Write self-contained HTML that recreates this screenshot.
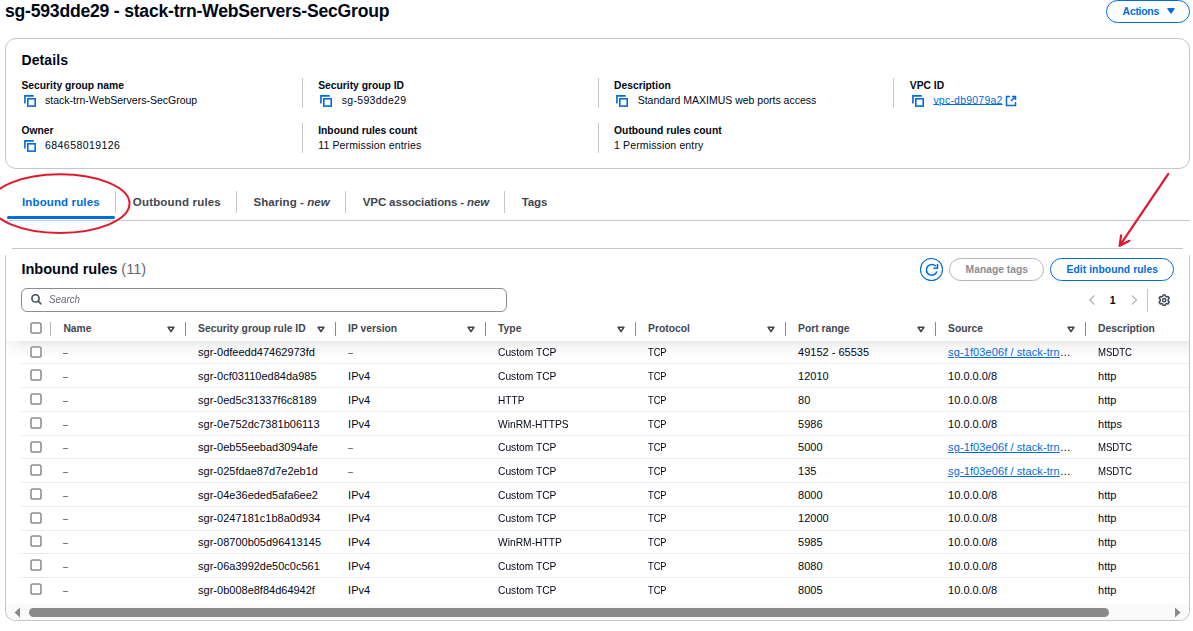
<!DOCTYPE html>
<html><head><meta charset="utf-8"><style>
html,body{margin:0;padding:0;background:#fff;}
body{width:1193px;height:631px;overflow:hidden;position:relative;font-family:"Liberation Sans", sans-serif;}
.t{position:absolute;white-space:nowrap;}
.r{position:absolute;}
</style></head><body>
<div class="t" style="left:5.00px;top:2.50px;font-size:17.6px;line-height:17.6px;font-weight:700;color:#000716;font-style:normal;letter-spacing:-0.22px;">sg-593dde29 - stack-trn-WebServers-SecGroup</div>
<div class="r" style="left:1106px;top:0px;width:84px;height:23px;box-sizing:border-box;border:1.8px solid #006ce0;border-radius:12px;"></div>
<div class="t" style="left:1122.60px;top:6.11px;font-size:10.5px;line-height:10.5px;font-weight:700;color:#006ce0;font-style:normal;letter-spacing:-0.3px;">Actions</div>
<svg class="r" style="left:1166px;top:7px" width="10" height="8"><path d="M1.6 1.6 H8.4 L5 6.4 Z" fill="#006ce0" stroke="#006ce0" stroke-width="1" stroke-linejoin="round"/></svg>
<div class="r" style="left:5px;top:38px;width:1185px;height:131px;box-sizing:border-box;border:1px solid #c6c6cd;border-radius:11px;"></div>
<div class="t" style="left:21.50px;top:52.65px;font-size:14px;line-height:14px;font-weight:700;color:#000716;font-style:normal;letter-spacing:0.1px;">Details</div>
<div class="r" style="left:302px;top:78px;width:1px;height:30px;background:#c6c6cd;"></div>
<div class="r" style="left:598px;top:78px;width:1px;height:30px;background:#c6c6cd;"></div>
<div class="r" style="left:893px;top:78px;width:1px;height:30px;background:#c6c6cd;"></div>
<div class="r" style="left:302px;top:123px;width:1px;height:30px;background:#c6c6cd;"></div>
<div class="r" style="left:598px;top:123px;width:1px;height:30px;background:#c6c6cd;"></div>
<div class="t" style="left:21.50px;top:80.98px;font-size:10.3px;line-height:10.3px;font-weight:700;color:#000716;font-style:normal;letter-spacing:0px;">Security group name</div>
<svg class="r" style="left:24px;top:94px" width="13" height="13" viewBox="0 0 13 13"><path d="M0.9 9.4 V1.9 H9.7" fill="none" stroke="#006ce0" stroke-width="1.6"/><rect x="3.8" y="4.8" width="7.4" height="7.3" fill="none" stroke="#006ce0" stroke-width="1.6"/></svg>
<div class="t" style="left:45.10px;top:94.71px;font-size:10.5px;line-height:10.5px;font-weight:400;color:#000716;font-style:normal;letter-spacing:0px;">stack-trn-WebServers-SecGroup</div>
<div class="t" style="left:318.20px;top:80.98px;font-size:10.3px;line-height:10.3px;font-weight:700;color:#000716;font-style:normal;letter-spacing:0px;">Security group ID</div>
<svg class="r" style="left:320px;top:94px" width="13" height="13" viewBox="0 0 13 13"><path d="M0.9 9.4 V1.9 H9.7" fill="none" stroke="#006ce0" stroke-width="1.6"/><rect x="3.8" y="4.8" width="7.4" height="7.3" fill="none" stroke="#006ce0" stroke-width="1.6"/></svg>
<div class="t" style="left:341.80px;top:94.71px;font-size:10.5px;line-height:10.5px;font-weight:400;color:#000716;font-style:normal;letter-spacing:0px;"><span style="letter-spacing:0.3px">sg-593dde29</span></div>
<div class="t" style="left:614.10px;top:80.98px;font-size:10.3px;line-height:10.3px;font-weight:700;color:#000716;font-style:normal;letter-spacing:0px;">Description</div>
<svg class="r" style="left:616px;top:94px" width="13" height="13" viewBox="0 0 13 13"><path d="M0.9 9.4 V1.9 H9.7" fill="none" stroke="#006ce0" stroke-width="1.6"/><rect x="3.8" y="4.8" width="7.4" height="7.3" fill="none" stroke="#006ce0" stroke-width="1.6"/></svg>
<div class="t" style="left:637.70px;top:94.71px;font-size:10.5px;line-height:10.5px;font-weight:400;color:#000716;font-style:normal;letter-spacing:0px;">Standard MAXIMUS web ports access</div>
<div class="t" style="left:909.80px;top:80.98px;font-size:10.3px;line-height:10.3px;font-weight:700;color:#000716;font-style:normal;letter-spacing:0px;">VPC ID</div>
<svg class="r" style="left:912px;top:94px" width="13" height="13" viewBox="0 0 13 13"><path d="M0.9 9.4 V1.9 H9.7" fill="none" stroke="#006ce0" stroke-width="1.6"/><rect x="3.8" y="4.8" width="7.4" height="7.3" fill="none" stroke="#006ce0" stroke-width="1.6"/></svg>
<div class="t" style="left:933.40px;top:94.71px;font-size:10.5px;line-height:10.5px;font-weight:400;color:#000716;font-style:normal;letter-spacing:0px;"><span style="color:#006ce0;text-decoration:underline;text-underline-offset:0.3px;letter-spacing:0.22px;padding-right:3px">vpc-db9079a2</span></div>
<svg class="r" style="left:1005px;top:95px" width="12" height="12" viewBox="0 0 12 12"><path d="M5 1.5 H1.5 V10.5 H10.5 V7" fill="none" stroke="#006ce0" stroke-width="1.5"/><path d="M6 6 L10.5 1.5 M7 1.5 H10.5 V5" fill="none" stroke="#006ce0" stroke-width="1.5"/></svg>
<div class="t" style="left:21.50px;top:125.98px;font-size:10.3px;line-height:10.3px;font-weight:700;color:#000716;font-style:normal;letter-spacing:0px;">Owner</div>
<svg class="r" style="left:24px;top:139px" width="13" height="13" viewBox="0 0 13 13"><path d="M0.9 9.4 V1.9 H9.7" fill="none" stroke="#006ce0" stroke-width="1.6"/><rect x="3.8" y="4.8" width="7.4" height="7.3" fill="none" stroke="#006ce0" stroke-width="1.6"/></svg>
<div class="t" style="left:45.10px;top:140.01px;font-size:10.5px;line-height:10.5px;font-weight:400;color:#000716;font-style:normal;letter-spacing:0px;"><span style="letter-spacing:0.42px">684658019126</span></div>
<div class="t" style="left:318.20px;top:125.98px;font-size:10.3px;line-height:10.3px;font-weight:700;color:#000716;font-style:normal;letter-spacing:0px;">Inbound rules count</div>
<div class="t" style="left:318.20px;top:140.01px;font-size:10.5px;line-height:10.5px;font-weight:400;color:#000716;font-style:normal;letter-spacing:0px;"><span style="letter-spacing:0.14px">11 Permission entries</span></div>
<div class="t" style="left:614.10px;top:125.98px;font-size:10.3px;line-height:10.3px;font-weight:700;color:#000716;font-style:normal;letter-spacing:0px;">Outbound rules count</div>
<div class="t" style="left:614.10px;top:140.01px;font-size:10.5px;line-height:10.5px;font-weight:400;color:#000716;font-style:normal;letter-spacing:0px;"><span style="letter-spacing:0.13px">1 Permission entry</span></div>
<div class="t" style="left:22.00px;top:196.57px;font-size:11.5px;line-height:11.5px;font-weight:700;color:#006ce0;font-style:normal;letter-spacing:0.13px;">Inbound rules</div>
<div class="t" style="left:132.80px;top:196.57px;font-size:11.5px;line-height:11.5px;font-weight:700;color:#424650;font-style:normal;letter-spacing:0.18px;">Outbound rules</div>
<div class="t" style="left:253.50px;top:196.57px;font-size:11.5px;line-height:11.5px;font-weight:700;color:#424650;font-style:normal;letter-spacing:0.06px;">Sharing - <i>new</i></div>
<div class="t" style="left:362.80px;top:196.57px;font-size:11.5px;line-height:11.5px;font-weight:700;color:#424650;font-style:normal;letter-spacing:-0.13px;">VPC associations - <i>new</i></div>
<div class="t" style="left:521.80px;top:196.57px;font-size:11.5px;line-height:11.5px;font-weight:700;color:#424650;font-style:normal;letter-spacing:-0.17px;">Tags</div>
<div class="r" style="left:115px;top:191px;width:1px;height:22px;background:#c6c6cd;"></div>
<div class="r" style="left:236px;top:191px;width:1px;height:22px;background:#c6c6cd;"></div>
<div class="r" style="left:345px;top:191px;width:1px;height:22px;background:#c6c6cd;"></div>
<div class="r" style="left:504px;top:191px;width:1px;height:22px;background:#c6c6cd;"></div>
<div class="r" style="left:7px;top:220px;width:1183px;height:1px;background:#c6c6cd;"></div>
<div class="r" style="left:7px;top:216px;width:108px;height:3px;background:#006ce0;border-radius:2px;"></div>
<div class="r" style="left:12px;top:248px;width:1171px;height:1px;background:#c6c6cd;"></div>
<div class="r" style="left:5px;top:255px;width:1185px;height:366px;box-sizing:border-box;border:1px solid #c6c6cd;border-top:none;border-radius:0 0 10px 10px;"></div>
<div class="t" style="left:21.50px;top:262.14px;font-size:14.6px;line-height:14.6px;font-weight:700;color:#000716;font-style:normal;letter-spacing:-0.05px;">Inbound rules <span style="font-weight:400;color:#656871">(11)</span></div>
<svg class="r" style="left:919px;top:257px" width="25" height="25" viewBox="0 0 25 25"><circle cx="12.5" cy="12.5" r="11" fill="none" stroke="#006ce0" stroke-width="1.1"/><path d="M17.9 14.6 A5.4 5.4 0 1 1 16.7 9.1" fill="none" stroke="#006ce0" stroke-width="1.6"/><path d="M18.5 7 V11.3 H14.5" fill="none" stroke="#006ce0" stroke-width="1.6"/></svg>
<div class="r" style="left:949px;top:258px;width:95px;height:23px;box-sizing:border-box;border:1px solid #b4b4bb;border-radius:12px;"></div>
<div class="t" style="left:965.60px;top:265.08px;font-size:10.3px;line-height:10.3px;font-weight:700;color:#8c8c94;font-style:normal;letter-spacing:0px;">Manage tags</div>
<div class="r" style="left:1050px;top:258px;width:124px;height:23px;box-sizing:border-box;border:1px solid #006ce0;border-radius:12px;"></div>
<div class="t" style="left:1066.60px;top:265.08px;font-size:10.3px;line-height:10.3px;font-weight:700;color:#006ce0;font-style:normal;letter-spacing:0.06px;">Edit inbound rules</div>
<div class="r" style="left:21px;top:288px;width:486px;height:24px;box-sizing:border-box;border:1px solid #8c8c94;border-radius:6px;"></div>
<svg class="r" style="left:30px;top:294px" width="12" height="12" viewBox="0 0 12 12"><circle cx="5.5" cy="4.4" r="3.6" fill="none" stroke="#414d5c" stroke-width="1.6"/><path d="M8.2 7.1 L10.8 9.8" stroke="#414d5c" stroke-width="1.6" stroke-linecap="round"/></svg>
<div class="t" style="left:48.90px;top:294.07px;font-size:10.9px;line-height:10.9px;font-weight:400;color:#656871;font-style:italic;letter-spacing:0px;transform:scaleX(0.9);transform-origin:0 0;">Search</div>
<svg class="r" style="left:1088px;top:294px" width="52" height="12" viewBox="0 0 52 12"><path d="M6.3 1.5 L1.8 6 L6.3 10.5" fill="none" stroke="#b4b4bb" stroke-width="1.3"/><path d="M44 1.5 L48.5 6 L44 10.5" fill="none" stroke="#b4b4bb" stroke-width="1.3"/></svg>
<div class="t" style="left:1109.80px;top:295.31px;font-size:10.5px;line-height:10.5px;font-weight:700;color:#000716;font-style:normal;letter-spacing:0px;">1</div>
<div class="r" style="left:1147px;top:289px;width:1px;height:23px;background:#c6c6cd;"></div>
<svg class="r" style="left:1157.8px;top:294px" width="12.4" height="12.4" viewBox="0 0 14 14"><path d="M5.8 1 H8.2 L8.6 2.6 L9.9 3.3 L11.5 2.8 L12.7 4.9 L11.5 6.1 V7.9 L12.7 9.1 L11.5 11.2 L9.9 10.7 L8.6 11.4 L8.2 13 H5.8 L5.4 11.4 L4.1 10.7 L2.5 11.2 L1.3 9.1 L2.5 7.9 V6.1 L1.3 4.9 L2.5 2.8 L4.1 3.3 L5.4 2.6 Z" fill="none" stroke="#414d5c" stroke-width="1.7" stroke-linejoin="round"/><circle cx="7" cy="7" r="1.8" fill="none" stroke="#414d5c" stroke-width="1.7"/></svg>
<div class="r" style="left:6px;top:341px;width:1183px;height:18px;background:linear-gradient(rgba(0,7,22,0.09),rgba(0,7,22,0.035) 35%,rgba(0,7,22,0) 100%);-webkit-mask-image:linear-gradient(90deg,rgba(0,0,0,0.35),#000 18px);"></div>
<div class="r" style="left:6px;top:315px;width:1183px;height:26px;background:#fff;"></div>
<svg class="r" style="left:30px;top:322px" width="13" height="13"><rect x="1" y="1" width="10" height="10" rx="1.8" fill="#fff" stroke="#8c8c94" stroke-width="1.55"/></svg>
<div class="r" style="left:50px;top:322px;width:1px;height:14px;background:#b4b4bb;"></div>
<div class="t" style="left:63.40px;top:323.78px;font-size:10.3px;line-height:10.3px;font-weight:700;color:#424650;font-style:normal;letter-spacing:0px;">Name</div>
<div class="t" style="left:198.10px;top:323.78px;font-size:10.3px;line-height:10.3px;font-weight:700;color:#424650;font-style:normal;letter-spacing:0px;">Security group rule ID</div>
<div class="t" style="left:348.10px;top:323.78px;font-size:10.3px;line-height:10.3px;font-weight:700;color:#424650;font-style:normal;letter-spacing:0px;">IP version</div>
<div class="t" style="left:498.10px;top:323.78px;font-size:10.3px;line-height:10.3px;font-weight:700;color:#424650;font-style:normal;letter-spacing:0px;">Type</div>
<div class="t" style="left:648.10px;top:323.78px;font-size:10.3px;line-height:10.3px;font-weight:700;color:#424650;font-style:normal;letter-spacing:0px;">Protocol</div>
<div class="t" style="left:798.10px;top:323.78px;font-size:10.3px;line-height:10.3px;font-weight:700;color:#424650;font-style:normal;letter-spacing:0px;">Port range</div>
<div class="t" style="left:948.10px;top:323.78px;font-size:10.3px;line-height:10.3px;font-weight:700;color:#424650;font-style:normal;letter-spacing:0px;">Source</div>
<div class="t" style="left:1098.10px;top:323.78px;font-size:10.3px;line-height:10.3px;font-weight:700;color:#424650;font-style:normal;letter-spacing:0px;">Description</div>
<div class="r" style="left:185px;top:322px;width:1px;height:14px;background:#8c8c94;"></div>
<svg class="r" style="left:166px;top:325px" width="10" height="8" viewBox="0 0 10 8"><path d="M2.1 2.3 H7.9 L5 6.6 Z" fill="none" stroke="#424650" stroke-width="1.6" stroke-linejoin="round"/></svg>
<div class="r" style="left:335px;top:322px;width:1px;height:14px;background:#8c8c94;"></div>
<svg class="r" style="left:316px;top:325px" width="10" height="8" viewBox="0 0 10 8"><path d="M2.1 2.3 H7.9 L5 6.6 Z" fill="none" stroke="#424650" stroke-width="1.6" stroke-linejoin="round"/></svg>
<div class="r" style="left:485px;top:322px;width:1px;height:14px;background:#8c8c94;"></div>
<svg class="r" style="left:466px;top:325px" width="10" height="8" viewBox="0 0 10 8"><path d="M2.1 2.3 H7.9 L5 6.6 Z" fill="none" stroke="#424650" stroke-width="1.6" stroke-linejoin="round"/></svg>
<div class="r" style="left:635px;top:322px;width:1px;height:14px;background:#8c8c94;"></div>
<svg class="r" style="left:616px;top:325px" width="10" height="8" viewBox="0 0 10 8"><path d="M2.1 2.3 H7.9 L5 6.6 Z" fill="none" stroke="#424650" stroke-width="1.6" stroke-linejoin="round"/></svg>
<div class="r" style="left:785px;top:322px;width:1px;height:14px;background:#8c8c94;"></div>
<svg class="r" style="left:766px;top:325px" width="10" height="8" viewBox="0 0 10 8"><path d="M2.1 2.3 H7.9 L5 6.6 Z" fill="none" stroke="#424650" stroke-width="1.6" stroke-linejoin="round"/></svg>
<div class="r" style="left:935px;top:322px;width:1px;height:14px;background:#8c8c94;"></div>
<svg class="r" style="left:916px;top:325px" width="10" height="8" viewBox="0 0 10 8"><path d="M2.1 2.3 H7.9 L5 6.6 Z" fill="none" stroke="#424650" stroke-width="1.6" stroke-linejoin="round"/></svg>
<div class="r" style="left:1085px;top:322px;width:1px;height:14px;background:#8c8c94;"></div>
<svg class="r" style="left:1066px;top:325px" width="10" height="8" viewBox="0 0 10 8"><path d="M2.1 2.3 H7.9 L5 6.6 Z" fill="none" stroke="#424650" stroke-width="1.6" stroke-linejoin="round"/></svg>
<svg class="r" style="left:30px;top:346px" width="13" height="13"><rect x="1" y="1" width="10" height="10" rx="1.8" fill="#fff" stroke="#8c8c94" stroke-width="1.55"/></svg>
<div class="r" style="left:21px;top:363px;width:1168px;height:1px;background:#e9ebed;"></div>
<div class="t" style="left:63.00px;top:347.39px;font-size:11px;line-height:11px;font-weight:400;color:#414d5c;font-style:normal;letter-spacing:0px;transform:scaleX(0.82);transform-origin:0 0;">–</div>
<div class="t" style="left:198.10px;top:347.39px;font-size:11px;line-height:11px;font-weight:400;color:#000716;font-style:normal;letter-spacing:0px;">sgr-0dfeedd47462973fd</div>
<div class="t" style="left:348.10px;top:347.39px;font-size:11px;line-height:11px;font-weight:400;color:#414d5c;font-style:normal;letter-spacing:0px;transform:scaleX(0.82);transform-origin:0 0;">–</div>
<div class="t" style="left:498.10px;top:347.39px;font-size:11px;line-height:11px;font-weight:400;color:#000716;font-style:normal;letter-spacing:0px;transform:scaleX(0.93);transform-origin:0 0;">Custom TCP</div>
<div class="t" style="left:648.10px;top:347.39px;font-size:11px;line-height:11px;font-weight:400;color:#000716;font-style:normal;letter-spacing:0px;transform:scaleX(0.84);transform-origin:0 0;">TCP</div>
<div class="t" style="left:798.10px;top:347.39px;font-size:11px;line-height:11px;font-weight:400;color:#000716;font-style:normal;letter-spacing:0px;">49152 - 65535</div>
<div class="t" style="left:948.10px;top:347.39px;font-size:11px;line-height:11px;font-weight:400;color:#000716;font-style:normal;letter-spacing:0px;"><span style="color:#006ce0;text-decoration:underline;letter-spacing:0.1px">sg-1f03e06f / stack-trn</span>…</div>
<div class="t" style="left:1098.10px;top:347.39px;font-size:11px;line-height:11px;font-weight:400;color:#000716;font-style:normal;letter-spacing:0px;transform:scaleX(0.87);transform-origin:0 0;">MSDTC</div>
<svg class="r" style="left:30px;top:369px" width="13" height="13"><rect x="1" y="1" width="10" height="10" rx="1.8" fill="#fff" stroke="#8c8c94" stroke-width="1.55"/></svg>
<div class="r" style="left:21px;top:387px;width:1168px;height:1px;background:#e9ebed;"></div>
<div class="t" style="left:63.00px;top:371.11px;font-size:11px;line-height:11px;font-weight:400;color:#414d5c;font-style:normal;letter-spacing:0px;transform:scaleX(0.82);transform-origin:0 0;">–</div>
<div class="t" style="left:198.10px;top:371.11px;font-size:11px;line-height:11px;font-weight:400;color:#000716;font-style:normal;letter-spacing:0px;">sgr-0cf03110ed84da985</div>
<div class="t" style="left:348.10px;top:371.11px;font-size:11px;line-height:11px;font-weight:400;color:#000716;font-style:normal;letter-spacing:0px;">IPv4</div>
<div class="t" style="left:498.10px;top:371.11px;font-size:11px;line-height:11px;font-weight:400;color:#000716;font-style:normal;letter-spacing:0px;transform:scaleX(0.93);transform-origin:0 0;">Custom TCP</div>
<div class="t" style="left:648.10px;top:371.11px;font-size:11px;line-height:11px;font-weight:400;color:#000716;font-style:normal;letter-spacing:0px;transform:scaleX(0.84);transform-origin:0 0;">TCP</div>
<div class="t" style="left:798.10px;top:371.11px;font-size:11px;line-height:11px;font-weight:400;color:#000716;font-style:normal;letter-spacing:0px;">12010</div>
<div class="t" style="left:948.10px;top:371.11px;font-size:11px;line-height:11px;font-weight:400;color:#000716;font-style:normal;letter-spacing:0px;">10.0.0.0/8</div>
<div class="t" style="left:1098.10px;top:371.11px;font-size:11px;line-height:11px;font-weight:400;color:#000716;font-style:normal;letter-spacing:0px;">http</div>
<svg class="r" style="left:30px;top:393px" width="13" height="13"><rect x="1" y="1" width="10" height="10" rx="1.8" fill="#fff" stroke="#8c8c94" stroke-width="1.55"/></svg>
<div class="r" style="left:21px;top:411px;width:1168px;height:1px;background:#e9ebed;"></div>
<div class="t" style="left:63.00px;top:394.83px;font-size:11px;line-height:11px;font-weight:400;color:#414d5c;font-style:normal;letter-spacing:0px;transform:scaleX(0.82);transform-origin:0 0;">–</div>
<div class="t" style="left:198.10px;top:394.83px;font-size:11px;line-height:11px;font-weight:400;color:#000716;font-style:normal;letter-spacing:0px;">sgr-0ed5c31337f6c8189</div>
<div class="t" style="left:348.10px;top:394.83px;font-size:11px;line-height:11px;font-weight:400;color:#000716;font-style:normal;letter-spacing:0px;">IPv4</div>
<div class="t" style="left:498.10px;top:394.83px;font-size:11px;line-height:11px;font-weight:400;color:#000716;font-style:normal;letter-spacing:0px;transform:scaleX(0.92);transform-origin:0 0;">HTTP</div>
<div class="t" style="left:648.10px;top:394.83px;font-size:11px;line-height:11px;font-weight:400;color:#000716;font-style:normal;letter-spacing:0px;transform:scaleX(0.84);transform-origin:0 0;">TCP</div>
<div class="t" style="left:798.10px;top:394.83px;font-size:11px;line-height:11px;font-weight:400;color:#000716;font-style:normal;letter-spacing:0px;">80</div>
<div class="t" style="left:948.10px;top:394.83px;font-size:11px;line-height:11px;font-weight:400;color:#000716;font-style:normal;letter-spacing:0px;">10.0.0.0/8</div>
<div class="t" style="left:1098.10px;top:394.83px;font-size:11px;line-height:11px;font-weight:400;color:#000716;font-style:normal;letter-spacing:0px;">http</div>
<svg class="r" style="left:30px;top:417px" width="13" height="13"><rect x="1" y="1" width="10" height="10" rx="1.8" fill="#fff" stroke="#8c8c94" stroke-width="1.55"/></svg>
<div class="r" style="left:21px;top:435px;width:1168px;height:1px;background:#e9ebed;"></div>
<div class="t" style="left:63.00px;top:418.55px;font-size:11px;line-height:11px;font-weight:400;color:#414d5c;font-style:normal;letter-spacing:0px;transform:scaleX(0.82);transform-origin:0 0;">–</div>
<div class="t" style="left:198.10px;top:418.55px;font-size:11px;line-height:11px;font-weight:400;color:#000716;font-style:normal;letter-spacing:0px;">sgr-0e752dc7381b06113</div>
<div class="t" style="left:348.10px;top:418.55px;font-size:11px;line-height:11px;font-weight:400;color:#000716;font-style:normal;letter-spacing:0px;">IPv4</div>
<div class="t" style="left:498.10px;top:418.55px;font-size:11px;line-height:11px;font-weight:400;color:#000716;font-style:normal;letter-spacing:0px;transform:scaleX(0.933);transform-origin:0 0;">WinRM-HTTPS</div>
<div class="t" style="left:648.10px;top:418.55px;font-size:11px;line-height:11px;font-weight:400;color:#000716;font-style:normal;letter-spacing:0px;transform:scaleX(0.84);transform-origin:0 0;">TCP</div>
<div class="t" style="left:798.10px;top:418.55px;font-size:11px;line-height:11px;font-weight:400;color:#000716;font-style:normal;letter-spacing:0px;">5986</div>
<div class="t" style="left:948.10px;top:418.55px;font-size:11px;line-height:11px;font-weight:400;color:#000716;font-style:normal;letter-spacing:0px;">10.0.0.0/8</div>
<div class="t" style="left:1098.10px;top:418.55px;font-size:11px;line-height:11px;font-weight:400;color:#000716;font-style:normal;letter-spacing:0px;">https</div>
<svg class="r" style="left:30px;top:441px" width="13" height="13"><rect x="1" y="1" width="10" height="10" rx="1.8" fill="#fff" stroke="#8c8c94" stroke-width="1.55"/></svg>
<div class="r" style="left:21px;top:458px;width:1168px;height:1px;background:#e9ebed;"></div>
<div class="t" style="left:63.00px;top:442.27px;font-size:11px;line-height:11px;font-weight:400;color:#414d5c;font-style:normal;letter-spacing:0px;transform:scaleX(0.82);transform-origin:0 0;">–</div>
<div class="t" style="left:198.10px;top:442.27px;font-size:11px;line-height:11px;font-weight:400;color:#000716;font-style:normal;letter-spacing:0px;">sgr-0eb55eebad3094afe</div>
<div class="t" style="left:348.10px;top:442.27px;font-size:11px;line-height:11px;font-weight:400;color:#414d5c;font-style:normal;letter-spacing:0px;transform:scaleX(0.82);transform-origin:0 0;">–</div>
<div class="t" style="left:498.10px;top:442.27px;font-size:11px;line-height:11px;font-weight:400;color:#000716;font-style:normal;letter-spacing:0px;transform:scaleX(0.93);transform-origin:0 0;">Custom TCP</div>
<div class="t" style="left:648.10px;top:442.27px;font-size:11px;line-height:11px;font-weight:400;color:#000716;font-style:normal;letter-spacing:0px;transform:scaleX(0.84);transform-origin:0 0;">TCP</div>
<div class="t" style="left:798.10px;top:442.27px;font-size:11px;line-height:11px;font-weight:400;color:#000716;font-style:normal;letter-spacing:0px;">5000</div>
<div class="t" style="left:948.10px;top:442.27px;font-size:11px;line-height:11px;font-weight:400;color:#000716;font-style:normal;letter-spacing:0px;"><span style="color:#006ce0;text-decoration:underline;letter-spacing:0.1px">sg-1f03e06f / stack-trn</span>…</div>
<div class="t" style="left:1098.10px;top:442.27px;font-size:11px;line-height:11px;font-weight:400;color:#000716;font-style:normal;letter-spacing:0px;transform:scaleX(0.87);transform-origin:0 0;">MSDTC</div>
<svg class="r" style="left:30px;top:464px" width="13" height="13"><rect x="1" y="1" width="10" height="10" rx="1.8" fill="#fff" stroke="#8c8c94" stroke-width="1.55"/></svg>
<div class="r" style="left:21px;top:482px;width:1168px;height:1px;background:#e9ebed;"></div>
<div class="t" style="left:63.00px;top:465.99px;font-size:11px;line-height:11px;font-weight:400;color:#414d5c;font-style:normal;letter-spacing:0px;transform:scaleX(0.82);transform-origin:0 0;">–</div>
<div class="t" style="left:198.10px;top:465.99px;font-size:11px;line-height:11px;font-weight:400;color:#000716;font-style:normal;letter-spacing:0px;">sgr-025fdae87d7e2eb1d</div>
<div class="t" style="left:348.10px;top:465.99px;font-size:11px;line-height:11px;font-weight:400;color:#414d5c;font-style:normal;letter-spacing:0px;transform:scaleX(0.82);transform-origin:0 0;">–</div>
<div class="t" style="left:498.10px;top:465.99px;font-size:11px;line-height:11px;font-weight:400;color:#000716;font-style:normal;letter-spacing:0px;transform:scaleX(0.93);transform-origin:0 0;">Custom TCP</div>
<div class="t" style="left:648.10px;top:465.99px;font-size:11px;line-height:11px;font-weight:400;color:#000716;font-style:normal;letter-spacing:0px;transform:scaleX(0.84);transform-origin:0 0;">TCP</div>
<div class="t" style="left:798.10px;top:465.99px;font-size:11px;line-height:11px;font-weight:400;color:#000716;font-style:normal;letter-spacing:0px;">135</div>
<div class="t" style="left:948.10px;top:465.99px;font-size:11px;line-height:11px;font-weight:400;color:#000716;font-style:normal;letter-spacing:0px;"><span style="color:#006ce0;text-decoration:underline;letter-spacing:0.1px">sg-1f03e06f / stack-trn</span>…</div>
<div class="t" style="left:1098.10px;top:465.99px;font-size:11px;line-height:11px;font-weight:400;color:#000716;font-style:normal;letter-spacing:0px;transform:scaleX(0.87);transform-origin:0 0;">MSDTC</div>
<svg class="r" style="left:30px;top:488px" width="13" height="13"><rect x="1" y="1" width="10" height="10" rx="1.8" fill="#fff" stroke="#8c8c94" stroke-width="1.55"/></svg>
<div class="r" style="left:21px;top:506px;width:1168px;height:1px;background:#e9ebed;"></div>
<div class="t" style="left:63.00px;top:489.71px;font-size:11px;line-height:11px;font-weight:400;color:#414d5c;font-style:normal;letter-spacing:0px;transform:scaleX(0.82);transform-origin:0 0;">–</div>
<div class="t" style="left:198.10px;top:489.71px;font-size:11px;line-height:11px;font-weight:400;color:#000716;font-style:normal;letter-spacing:0px;">sgr-04e36eded5afa6ee2</div>
<div class="t" style="left:348.10px;top:489.71px;font-size:11px;line-height:11px;font-weight:400;color:#000716;font-style:normal;letter-spacing:0px;">IPv4</div>
<div class="t" style="left:498.10px;top:489.71px;font-size:11px;line-height:11px;font-weight:400;color:#000716;font-style:normal;letter-spacing:0px;transform:scaleX(0.93);transform-origin:0 0;">Custom TCP</div>
<div class="t" style="left:648.10px;top:489.71px;font-size:11px;line-height:11px;font-weight:400;color:#000716;font-style:normal;letter-spacing:0px;transform:scaleX(0.84);transform-origin:0 0;">TCP</div>
<div class="t" style="left:798.10px;top:489.71px;font-size:11px;line-height:11px;font-weight:400;color:#000716;font-style:normal;letter-spacing:0px;">8000</div>
<div class="t" style="left:948.10px;top:489.71px;font-size:11px;line-height:11px;font-weight:400;color:#000716;font-style:normal;letter-spacing:0px;">10.0.0.0/8</div>
<div class="t" style="left:1098.10px;top:489.71px;font-size:11px;line-height:11px;font-weight:400;color:#000716;font-style:normal;letter-spacing:0px;">http</div>
<svg class="r" style="left:30px;top:512px" width="13" height="13"><rect x="1" y="1" width="10" height="10" rx="1.8" fill="#fff" stroke="#8c8c94" stroke-width="1.55"/></svg>
<div class="r" style="left:21px;top:530px;width:1168px;height:1px;background:#e9ebed;"></div>
<div class="t" style="left:63.00px;top:513.43px;font-size:11px;line-height:11px;font-weight:400;color:#414d5c;font-style:normal;letter-spacing:0px;transform:scaleX(0.82);transform-origin:0 0;">–</div>
<div class="t" style="left:198.10px;top:513.43px;font-size:11px;line-height:11px;font-weight:400;color:#000716;font-style:normal;letter-spacing:0px;">sgr-0247181c1b8a0d934</div>
<div class="t" style="left:348.10px;top:513.43px;font-size:11px;line-height:11px;font-weight:400;color:#000716;font-style:normal;letter-spacing:0px;">IPv4</div>
<div class="t" style="left:498.10px;top:513.43px;font-size:11px;line-height:11px;font-weight:400;color:#000716;font-style:normal;letter-spacing:0px;transform:scaleX(0.93);transform-origin:0 0;">Custom TCP</div>
<div class="t" style="left:648.10px;top:513.43px;font-size:11px;line-height:11px;font-weight:400;color:#000716;font-style:normal;letter-spacing:0px;transform:scaleX(0.84);transform-origin:0 0;">TCP</div>
<div class="t" style="left:798.10px;top:513.43px;font-size:11px;line-height:11px;font-weight:400;color:#000716;font-style:normal;letter-spacing:0px;">12000</div>
<div class="t" style="left:948.10px;top:513.43px;font-size:11px;line-height:11px;font-weight:400;color:#000716;font-style:normal;letter-spacing:0px;">10.0.0.0/8</div>
<div class="t" style="left:1098.10px;top:513.43px;font-size:11px;line-height:11px;font-weight:400;color:#000716;font-style:normal;letter-spacing:0px;">http</div>
<svg class="r" style="left:30px;top:535px" width="13" height="13"><rect x="1" y="1" width="10" height="10" rx="1.8" fill="#fff" stroke="#8c8c94" stroke-width="1.55"/></svg>
<div class="r" style="left:21px;top:553px;width:1168px;height:1px;background:#e9ebed;"></div>
<div class="t" style="left:63.00px;top:537.15px;font-size:11px;line-height:11px;font-weight:400;color:#414d5c;font-style:normal;letter-spacing:0px;transform:scaleX(0.82);transform-origin:0 0;">–</div>
<div class="t" style="left:198.10px;top:537.15px;font-size:11px;line-height:11px;font-weight:400;color:#000716;font-style:normal;letter-spacing:0px;">sgr-08700b05d96413145</div>
<div class="t" style="left:348.10px;top:537.15px;font-size:11px;line-height:11px;font-weight:400;color:#000716;font-style:normal;letter-spacing:0px;">IPv4</div>
<div class="t" style="left:498.10px;top:537.15px;font-size:11px;line-height:11px;font-weight:400;color:#000716;font-style:normal;letter-spacing:0px;transform:scaleX(0.933);transform-origin:0 0;">WinRM-HTTP</div>
<div class="t" style="left:648.10px;top:537.15px;font-size:11px;line-height:11px;font-weight:400;color:#000716;font-style:normal;letter-spacing:0px;transform:scaleX(0.84);transform-origin:0 0;">TCP</div>
<div class="t" style="left:798.10px;top:537.15px;font-size:11px;line-height:11px;font-weight:400;color:#000716;font-style:normal;letter-spacing:0px;">5985</div>
<div class="t" style="left:948.10px;top:537.15px;font-size:11px;line-height:11px;font-weight:400;color:#000716;font-style:normal;letter-spacing:0px;">10.0.0.0/8</div>
<div class="t" style="left:1098.10px;top:537.15px;font-size:11px;line-height:11px;font-weight:400;color:#000716;font-style:normal;letter-spacing:0px;">http</div>
<svg class="r" style="left:30px;top:559px" width="13" height="13"><rect x="1" y="1" width="10" height="10" rx="1.8" fill="#fff" stroke="#8c8c94" stroke-width="1.55"/></svg>
<div class="r" style="left:21px;top:577px;width:1168px;height:1px;background:#e9ebed;"></div>
<div class="t" style="left:63.00px;top:560.87px;font-size:11px;line-height:11px;font-weight:400;color:#414d5c;font-style:normal;letter-spacing:0px;transform:scaleX(0.82);transform-origin:0 0;">–</div>
<div class="t" style="left:198.10px;top:560.87px;font-size:11px;line-height:11px;font-weight:400;color:#000716;font-style:normal;letter-spacing:0px;">sgr-06a3992de50c0c561</div>
<div class="t" style="left:348.10px;top:560.87px;font-size:11px;line-height:11px;font-weight:400;color:#000716;font-style:normal;letter-spacing:0px;">IPv4</div>
<div class="t" style="left:498.10px;top:560.87px;font-size:11px;line-height:11px;font-weight:400;color:#000716;font-style:normal;letter-spacing:0px;transform:scaleX(0.93);transform-origin:0 0;">Custom TCP</div>
<div class="t" style="left:648.10px;top:560.87px;font-size:11px;line-height:11px;font-weight:400;color:#000716;font-style:normal;letter-spacing:0px;transform:scaleX(0.84);transform-origin:0 0;">TCP</div>
<div class="t" style="left:798.10px;top:560.87px;font-size:11px;line-height:11px;font-weight:400;color:#000716;font-style:normal;letter-spacing:0px;">8080</div>
<div class="t" style="left:948.10px;top:560.87px;font-size:11px;line-height:11px;font-weight:400;color:#000716;font-style:normal;letter-spacing:0px;">10.0.0.0/8</div>
<div class="t" style="left:1098.10px;top:560.87px;font-size:11px;line-height:11px;font-weight:400;color:#000716;font-style:normal;letter-spacing:0px;">http</div>
<svg class="r" style="left:30px;top:583px" width="13" height="13"><rect x="1" y="1" width="10" height="10" rx="1.8" fill="#fff" stroke="#8c8c94" stroke-width="1.55"/></svg>
<div class="t" style="left:63.00px;top:584.59px;font-size:11px;line-height:11px;font-weight:400;color:#414d5c;font-style:normal;letter-spacing:0px;transform:scaleX(0.82);transform-origin:0 0;">–</div>
<div class="t" style="left:198.10px;top:584.59px;font-size:11px;line-height:11px;font-weight:400;color:#000716;font-style:normal;letter-spacing:0px;">sgr-0b008e8f84d64942f</div>
<div class="t" style="left:348.10px;top:584.59px;font-size:11px;line-height:11px;font-weight:400;color:#000716;font-style:normal;letter-spacing:0px;">IPv4</div>
<div class="t" style="left:498.10px;top:584.59px;font-size:11px;line-height:11px;font-weight:400;color:#000716;font-style:normal;letter-spacing:0px;transform:scaleX(0.93);transform-origin:0 0;">Custom TCP</div>
<div class="t" style="left:648.10px;top:584.59px;font-size:11px;line-height:11px;font-weight:400;color:#000716;font-style:normal;letter-spacing:0px;transform:scaleX(0.84);transform-origin:0 0;">TCP</div>
<div class="t" style="left:798.10px;top:584.59px;font-size:11px;line-height:11px;font-weight:400;color:#000716;font-style:normal;letter-spacing:0px;">8005</div>
<div class="t" style="left:948.10px;top:584.59px;font-size:11px;line-height:11px;font-weight:400;color:#000716;font-style:normal;letter-spacing:0px;">10.0.0.0/8</div>
<div class="t" style="left:1098.10px;top:584.59px;font-size:11px;line-height:11px;font-weight:400;color:#000716;font-style:normal;letter-spacing:0px;">http</div>
<div class="r" style="left:6px;top:604px;width:1183px;height:16px;background:#fafafa;border-radius:0 0 9px 9px;"></div>
<div class="r" style="left:29px;top:608px;width:1080px;height:9px;background:#8a8a8a;border-radius:4.5px;"></div>
<svg class="r" style="left:14px;top:607px" width="7" height="11"><path d="M6 0.5 V10.5 L0.5 5.5 Z" fill="#8a8a8a"/></svg>
<svg class="r" style="left:1174px;top:607px" width="7" height="11"><path d="M1 0.5 V10.5 L6.5 5.5 Z" fill="#8a8a8a"/></svg>
<svg class="r" style="left:0;top:0" width="1193" height="631"><ellipse cx="60" cy="203.6" rx="69.5" ry="29.3" fill="none" stroke="#e0192d" stroke-width="2"/><path d="M1168.3 173.8 L1119.6 245.8 M1121.1 235.3 L1119.6 245.8 L1129.4 240.8" fill="none" stroke="#e0192d" stroke-width="2.2" stroke-linecap="round" stroke-linejoin="round"/></svg>
</body></html>
